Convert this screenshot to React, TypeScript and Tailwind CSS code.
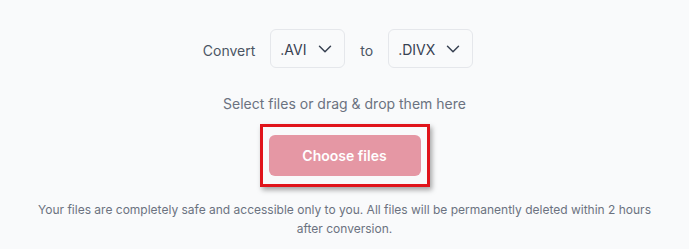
import { ChevronDown } from "lucide-react";

const Select = ({ value, width }: { value: string; width: string }) => (
  <div
    className={`flex h-[39px] ${width} items-center justify-between rounded-md border border-[#e5e7eb] bg-[#f9fafb] pl-[9px] pr-[8px] text-[14px] text-[#374151]`}
  >
    <span className="pt-[1px]">{value}</span>
    <ChevronDown size={22} strokeWidth={1.6} className="text-[#374151]" />
  </div>
);

export default function App() {
  return (
    <div className="flex h-[249px] w-[689px] flex-col items-center bg-[#f9fafb] font-['Inter',sans-serif]">
      {/* Convert row */}
      <div className="mt-[29px] ml-[-13px] flex items-center text-[14px] text-[#4b5563]">
        <span className="mr-[15px] pt-[4px]">Convert</span>
        <Select value=".AVI" width="w-[75px]" />
        <span className="mx-[15px] pt-[4px]">to</span>
        <Select value=".DIVX" width="w-[85px]" />
      </div>

      <p className="mt-[25px] text-[14px] text-[#6b7280]">Select files or drag &amp; drop them here</p>

      {/* Button with highlight frame */}
      <div className="mt-[10px] border-[3px] border-[#e0141b] px-[6px] py-[8px] shadow-[2px_3px_5px_rgba(0,0,0,0.35)]">
        <button className="h-[41px] w-[152px] rounded-md bg-[#e597a4] text-[14px] font-semibold text-white">
          Choose files
        </button>
      </div>

      <p className="mt-[13px] w-[630px] text-center text-[12px] leading-[19px] text-[#6b7280]">
        Your files are completely safe and accessible only to you. All files will be permanently deleted within 2 hours after conversion.
      </p>
    </div>
  );
}
